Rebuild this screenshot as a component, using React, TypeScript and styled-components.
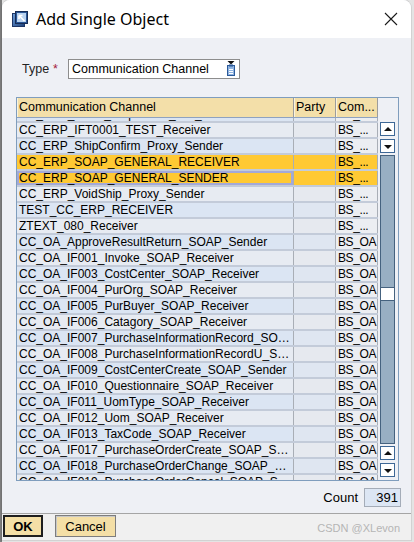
import React from 'react';
import styled, { createGlobalStyle } from 'styled-components';

const GlobalStyle = createGlobalStyle`
  html, body {
    margin: 0;
    padding: 0;
  }
  body {
    background: #e4e4e4;
    font-family: "Liberation Sans", Arial, sans-serif;
  }
`;

const Screen = styled.div`
  width: 414px;
  height: 542px;
  box-sizing: border-box;
  padding: 0 3px 2px 2px;
  background: linear-gradient(to right, #7c7c7c 0 2px, #e4e4e4 2px);
  overflow: hidden;
`;

const Window = styled.div`
  height: 540px;
  display: flex;
  flex-direction: column;
  background: #eef0f5;
  border-radius: 8px 8px 0 0;
  overflow: hidden;
  box-shadow: 0 0 0 1px rgba(0, 0, 0, 0.08);
`;

const TitleBar = styled.div`
  height: 38px;
  flex: none;
  display: flex;
  align-items: center;
  gap: 8px;
  padding: 0 13px 0 10px;
  background: #fff;
`;

const Title = styled.div`
  flex: 1;
  font-family: "Noto Sans", "Open Sans", sans-serif;
  font-size: 16px;
  color: #000;
`;

const Body = styled.div`
  display: flex;
  flex-direction: column;
  padding: 0 12px 0 14px;
`;

const TypeRow = styled.div`
  margin-top: 21px;
  height: 20px;
  display: flex;
  align-items: center;
`;

const Label = styled.div`
  width: 46px;
  margin-left: 6px;
  font-size: 12.5px;
  color: #222;
`;

const Required = styled.span`
  color: #a3203c;
  margin-left: 4px;
`;

const Field = styled.div`
  width: 172px;
  height: 20px;
  box-sizing: border-box;
  display: flex;
  align-items: center;
  padding: 0 3px 0 3px;
  border: 1px solid #8d8d8d;
  background: #fff;
  font-size: 12.5px;
  color: #000;
`;

const FieldText = styled.span`
  flex: 1;
`;

const Frame = styled.div`
  margin-top: 18px;
  width: 383px;
  height: 384px;
  box-sizing: border-box;
  display: flex;
  border: 1px solid #7f9dbd;
`;

const TableMain = styled.div`
  width: 361px;
  display: flex;
  flex-direction: column;
`;

const cols = '277px 42px 42px';

const HeaderRow = styled.div`
  height: 20px;
  box-sizing: border-box;
  display: grid;
  grid-template-columns: ${cols};
  border-bottom: 1px solid #8ea2c0;
`;

const HeaderCell = styled.div`
  box-sizing: border-box;
  padding: 0 2px;
  background: #f3dfa9;
  border-right: 1px solid #9c9c9c;
  box-shadow: inset 1px 0 0 #fbf3dc;
  font-size: 12.5px;
  line-height: 19px;
  white-space: nowrap;
  overflow: hidden;
`;

const Viewport = styled.div`
  height: 362px;
  overflow: hidden;
`;

/* list is scrolled: the first row is only partly visible */
const Rows = styled.div`
  margin-top: -11px;
`;

const Row = styled.div`
  height: 16px;
  box-sizing: border-box;
  display: grid;
  grid-template-columns: ${cols};
  border-bottom: 2px solid #c3cbd9;
`;

type Kind = 'channel' | 'party' | 'comp';

const cellBg = (kind: Kind, odd: boolean, selected: boolean) => {
  if (selected) return '#ffc933';
  if (kind === 'comp') return '#eceef2';
  if (kind === 'party') return odd ? '#dfe6f1' : '#e6e9ef';
  return odd ? '#dbe5f3' : '#e7ebf2';
};

const Cell = styled.div<{ $kind: Kind; $odd: boolean; $selected: boolean; $focus?: boolean }>`
  box-sizing: border-box;
  padding: ${p => (p.$kind === 'comp' ? '0 0 0 2px' : '0 2px')};
  background: ${p => cellBg(p.$kind, p.$odd, p.$selected)};
  border-right: 1px solid #a9aeb6;
  box-shadow: ${p => (p.$focus ? 'inset 0 0 0 2px #a3a9d8' : 'none')};
  font-size: 12px;
  letter-spacing: ${p => (p.$kind === 'comp' ? '-0.4px' : '0')};
  line-height: 14px;
  color: #000;
  white-space: nowrap;
  overflow: hidden;
  text-overflow: ${p => (p.$kind === 'comp' ? 'clip' : 'ellipsis')};
`;

const ScrollCol = styled.div`
  width: 20px;
  box-sizing: border-box;
  display: flex;
  flex-direction: column;
  padding: 24px 0 3px 2px;
`;

const ScrollButton = styled.div<{ $gapAfter: number }>`
  width: 15px;
  height: 14px;
  flex: none;
  box-sizing: border-box;
  display: flex;
  align-items: center;
  justify-content: center;
  margin-bottom: ${p => p.$gapAfter}px;
  border: 1px solid #3d6796;
  background: #fff;
`;

const Arrow = styled.span<{ $dir: 'up' | 'down' }>`
  width: 0;
  height: 0;
  border-left: 4px solid transparent;
  border-right: 4px solid transparent;
  ${p =>
    p.$dir === 'up'
      ? 'border-bottom: 4px solid #111; margin-top: -1px;'
      : 'border-top: 4px solid #111; margin-top: 2px;'}
`;

const Track = styled.div`
  flex: 1;
  width: 15px;
  box-sizing: border-box;
  margin-bottom: 2px;
  border: 1px solid #45627f;
  background: #98afc3;
`;

const Thumb = styled.div`
  margin-top: 131px;
  height: 14px;
  box-sizing: border-box;
  background: #fff;
  border-top: 1px solid #45627f;
  border-bottom: 1px solid #45627f;
`;

const CountRow = styled.div`
  margin: 7px -2px 0 0;
  height: 19px;
  display: flex;
  justify-content: flex-end;
  align-items: center;
  gap: 6px;
  font-size: 13px;
`;

const CountBox = styled.div`
  width: 37px;
  height: 19px;
  box-sizing: border-box;
  padding-right: 2px;
  border: 1px solid #a4acb8;
  background: #dce6f4;
  text-align: right;
  line-height: 17px;
`;

const Footer = styled.div`
  margin-top: 6px;
  flex: 1;
  display: flex;
  align-items: flex-start;
  gap: 12px;
  padding: 1px 11px 0 1px;
  border-top: 1px solid #a5a5a5;
  background: #f0f0f0;
`;

const Button = styled.button<{ $primary?: boolean }>`
  height: 22px;
  width: ${p => (p.$primary ? 40 : 61)}px;
  box-sizing: border-box;
  padding: 0;
  border: ${p => (p.$primary ? '2px solid #1e1e1e' : '1px solid #7d7d7d')};
  box-shadow: ${p => (p.$primary ? 'none' : 'inset 1px 1px 0 #c8c8c8')};
  background: #f4dfa6;
  font-family: "Liberation Sans", Arial, sans-serif;
  font-size: 13px;
  font-weight: ${p => (p.$primary ? 700 : 400)};
  color: #000;
`;

const Watermark = styled.div`
  margin-left: auto;
  align-self: center;
  font-size: 11px;
  color: #b5b5b5;
`;

const AppIcon = () => (
  <svg width="16" height="16" viewBox="0 0 16 16">
    <defs>
      <linearGradient id="appg" x1="0" y1="0" x2="1" y2="1">
        <stop offset="0" stopColor="#6fa0dc" />
        <stop offset="1" stopColor="#1c3f78" />
      </linearGradient>
    </defs>
    <rect x="0.5" y="2.5" width="12" height="13" fill="url(#appg)" stroke="#1d3566" />
    <rect x="3.5" y="0.5" width="12" height="12" fill="#2a5696" stroke="#162c55" />
    <rect x="5" y="2" width="9" height="9" fill="#b9d3f0" />
    <path d="M12.5 10 L7 4.5 M7 4.5 h3.5 M7 4.5 v3.5" stroke="#fff" strokeWidth="1.6" fill="none" />
  </svg>
);

const CloseIcon = () => (
  <svg width="14" height="14" viewBox="0 0 14 14">
    <path d="M1 1 L13 13 M13 1 L1 13" stroke="#1a1a1a" strokeWidth="1.1" />
  </svg>
);

const HelpIcon = () => (
  <svg width="10" height="16" viewBox="0 0 10 16">
    <path d="M1.5 0 h7 l-3.5 3.5 z" fill="#111" />
    <rect x="1.5" y="4.5" width="7" height="10" fill="#8fb3e0" stroke="#2b5a9a" />
    <rect x="3" y="3.5" width="4" height="2" fill="#2b5a9a" />
    <path d="M3 8.5h4M3 10.5h4M3 12.5h4" stroke="#fff" />
  </svg>
);

interface Entry {
  name: string;
  comp: string;
  selected?: boolean;
  focus?: boolean;
}

const rows: Entry[] = [
  { name: 'CC_ERP_IDOC_ShipNotice_File_Sender', comp: 'BS_...' },
  { name: 'CC_ERP_IFT0001_TEST_Receiver', comp: 'BS_...' },
  { name: 'CC_ERP_ShipConfirm_Proxy_Sender', comp: 'BS_...' },
  { name: 'CC_ERP_SOAP_GENERAL_RECEIVER', comp: 'BS_...', selected: true },
  { name: 'CC_ERP_SOAP_GENERAL_SENDER', comp: 'BS_...', selected: true, focus: true },
  { name: 'CC_ERP_VoidShip_Proxy_Sender', comp: 'BS_...' },
  { name: 'TEST_CC_ERP_RECEIVER', comp: 'BS_...' },
  { name: 'ZTEXT_080_Receiver', comp: 'BS_...' },
  { name: 'CC_OA_ApproveResultReturn_SOAP_Sender', comp: 'BS_OA' },
  { name: 'CC_OA_IF001_Invoke_SOAP_Receiver', comp: 'BS_OA' },
  { name: 'CC_OA_IF003_CostCenter_SOAP_Receiver', comp: 'BS_OA' },
  { name: 'CC_OA_IF004_PurOrg_SOAP_Receiver', comp: 'BS_OA' },
  { name: 'CC_OA_IF005_PurBuyer_SOAP_Receiver', comp: 'BS_OA' },
  { name: 'CC_OA_IF006_Catagory_SOAP_Receiver', comp: 'BS_OA' },
  { name: 'CC_OA_IF007_PurchaseInformationRecord_SOAP_Receiver', comp: 'BS_OA' },
  { name: 'CC_OA_IF008_PurchaseInformationRecordU_SOAP_Sender', comp: 'BS_OA' },
  { name: 'CC_OA_IF009_CostCenterCreate_SOAP_Sender', comp: 'BS_OA' },
  { name: 'CC_OA_IF010_Questionnaire_SOAP_Receiver', comp: 'BS_OA' },
  { name: 'CC_OA_IF011_UomType_SOAP_Receiver', comp: 'BS_OA' },
  { name: 'CC_OA_IF012_Uom_SOAP_Receiver', comp: 'BS_OA' },
  { name: 'CC_OA_IF013_TaxCode_SOAP_Receiver', comp: 'BS_OA' },
  { name: 'CC_OA_IF017_PurchaseOrderCreate_SOAP_Sender', comp: 'BS_OA' },
  { name: 'CC_OA_IF018_PurchaseOrderChange_SOAP_Sender', comp: 'BS_OA' },
  { name: 'CC_OA_IF019_PurchaseOrderCancel_SOAP_Sender', comp: 'BS_OA' },
];

export default function App() {
  return (
    <Screen>
      <GlobalStyle />
      <Window>
        <TitleBar>
          <AppIcon />
          <Title>Add Single Object</Title>
          <CloseIcon />
        </TitleBar>

        <Body>
          <TypeRow>
            <Label>
              Type<Required>*</Required>
            </Label>
            <Field>
              <FieldText>Communication Channel</FieldText>
              <HelpIcon />
            </Field>
          </TypeRow>

          <Frame>
            <TableMain>
              <HeaderRow>
                <HeaderCell>Communication Channel</HeaderCell>
                <HeaderCell>Party</HeaderCell>
                <HeaderCell>Com...</HeaderCell>
              </HeaderRow>
              <Viewport>
                <Rows>
                  {rows.map((r, i) => {
                    const odd = i % 2 === 0;
                    const sel = !!r.selected;
                    return (
                      <Row key={r.name}>
                        <Cell $kind="channel" $odd={odd} $selected={sel} $focus={r.focus}>
                          {r.name}
                        </Cell>
                        <Cell $kind="party" $odd={odd} $selected={sel} />
                        <Cell $kind="comp" $odd={odd} $selected={sel}>
                          {r.comp}
                        </Cell>
                      </Row>
                    );
                  })}
                </Rows>
              </Viewport>
            </TableMain>

            <ScrollCol>
              <ScrollButton $gapAfter={3}>
                <Arrow $dir="up" />
              </ScrollButton>
              <ScrollButton $gapAfter={2}>
                <Arrow $dir="down" />
              </ScrollButton>
              <Track>
                <Thumb />
              </Track>
              <ScrollButton $gapAfter={3}>
                <Arrow $dir="up" />
              </ScrollButton>
              <ScrollButton $gapAfter={0}>
                <Arrow $dir="down" />
              </ScrollButton>
            </ScrollCol>
          </Frame>

          <CountRow>
            <span>Count</span>
            <CountBox>391</CountBox>
          </CountRow>
        </Body>

        <Footer>
          <Button $primary>OK</Button>
          <Button>Cancel</Button>
          <Watermark>CSDN @XLevon</Watermark>
        </Footer>
      </Window>
    </Screen>
  );
}
